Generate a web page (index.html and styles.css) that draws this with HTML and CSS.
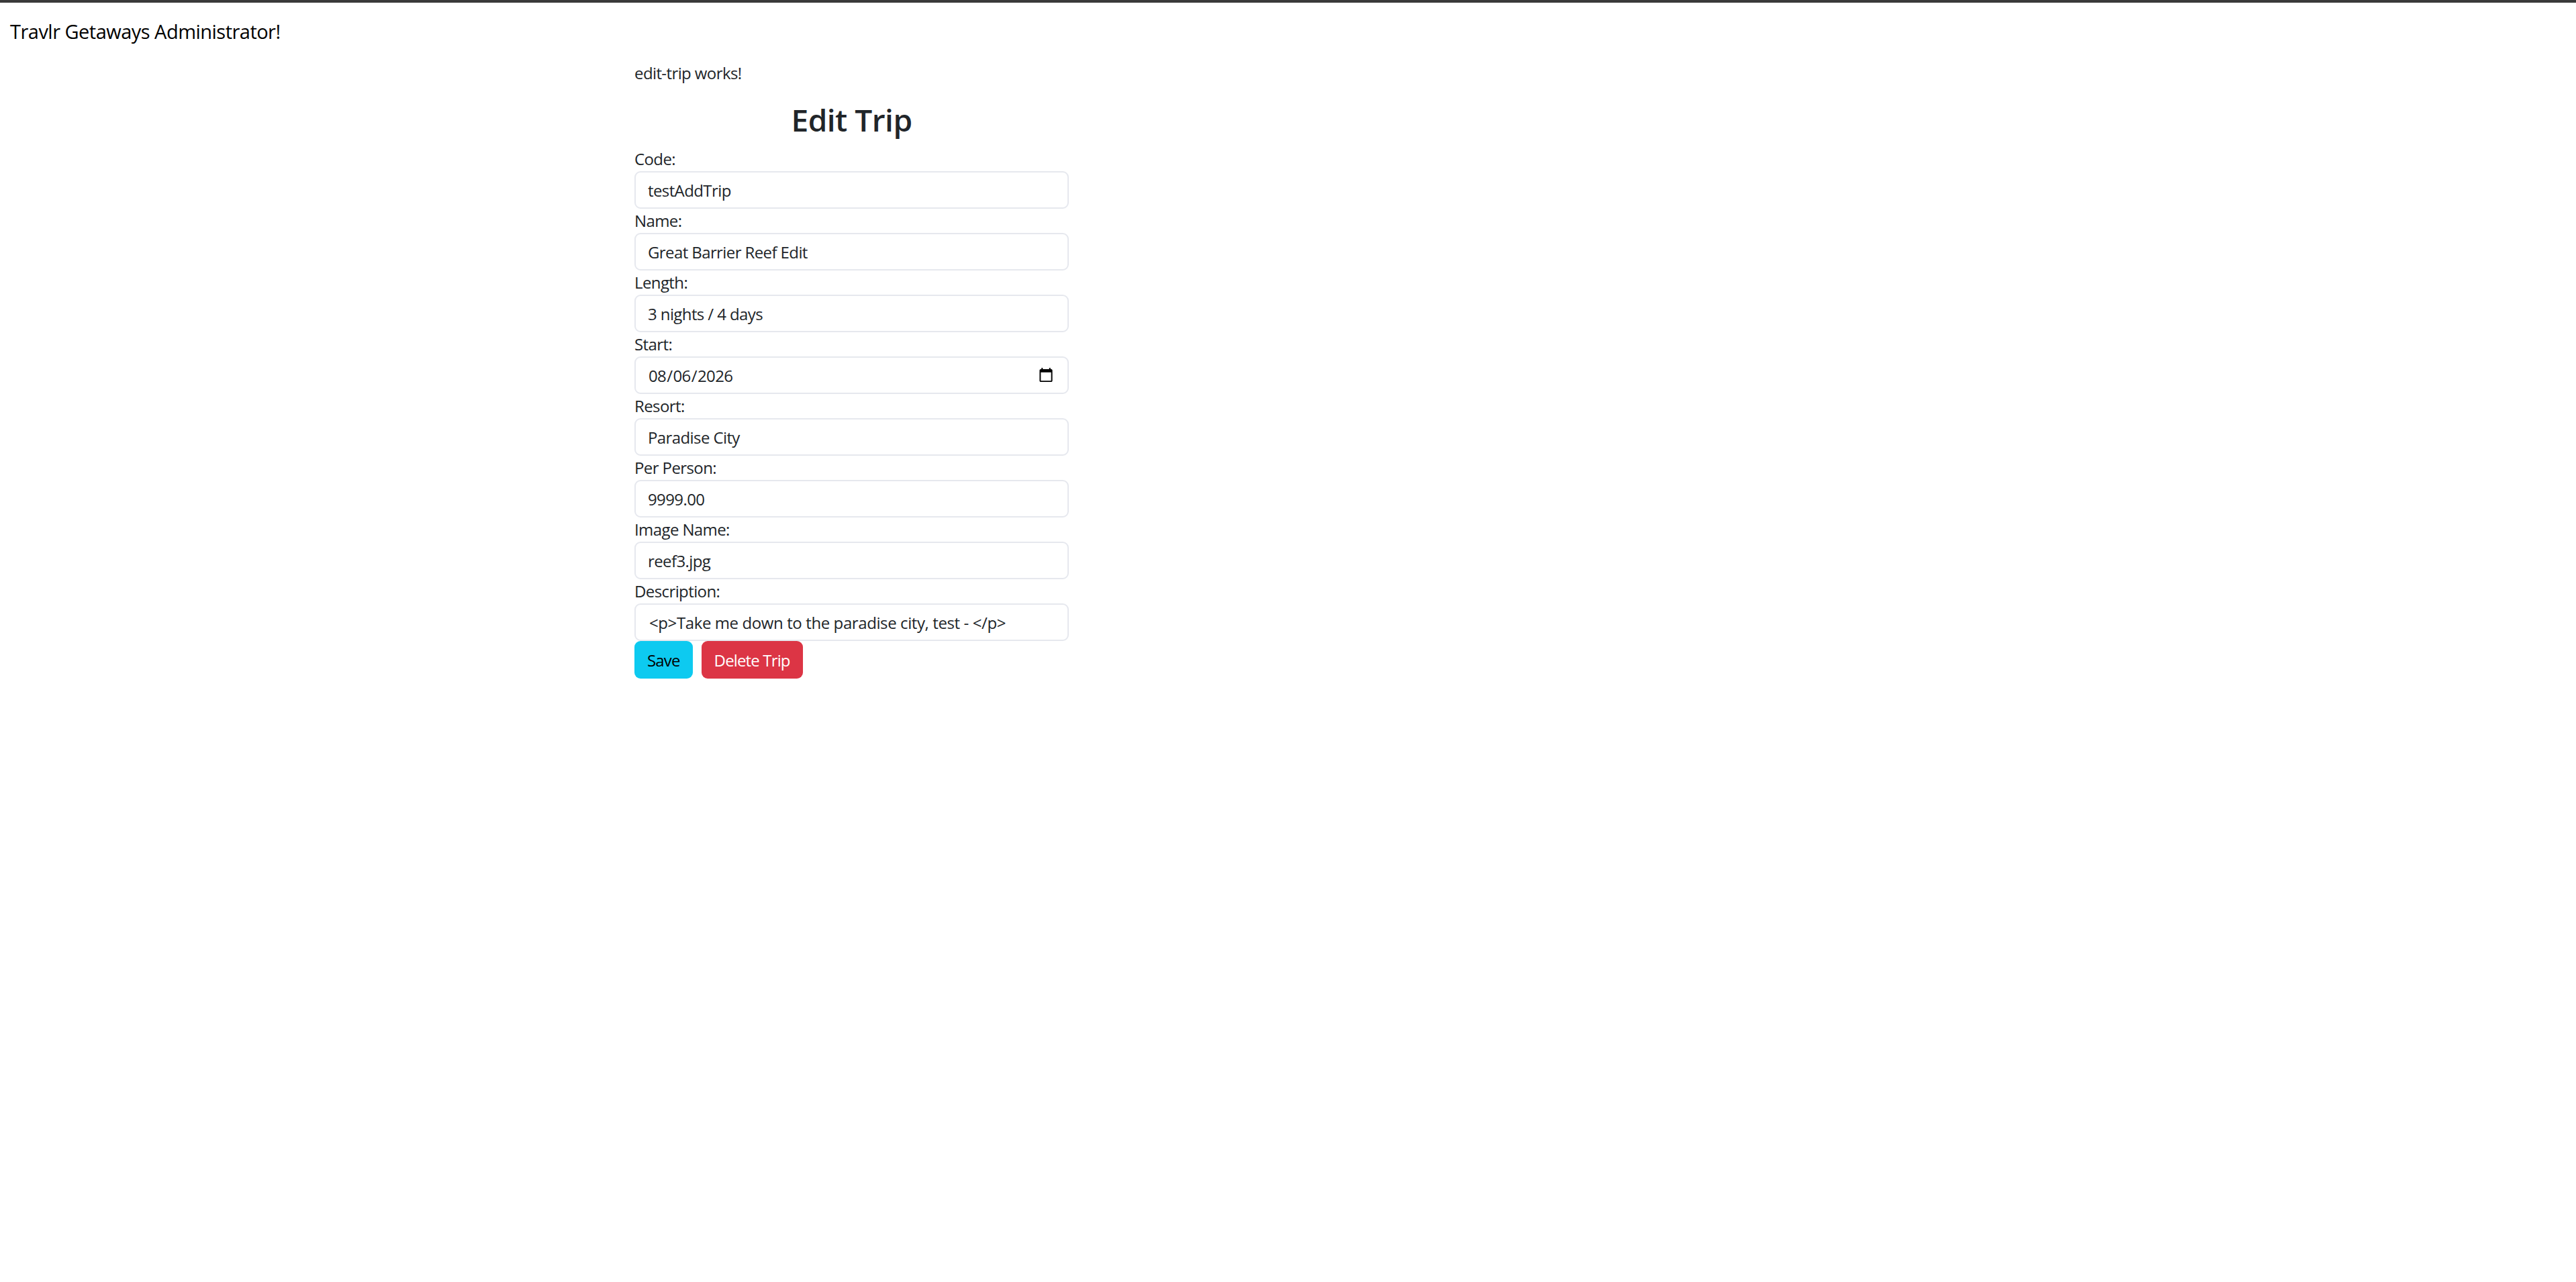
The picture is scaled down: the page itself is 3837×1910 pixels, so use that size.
FILE: index.html

```html
<!doctype html>
<html>
<head>
	<meta charset="utf-8">
	<title>Travlr Getaways Admin</title>
	<link rel="stylesheet" href="styles.css">
</head>
<body>
	<div class="brand">Travlr Getaways Administrator!</div>
	<div class="edit-wrap">
		<p class="works">edit-trip works!</p>
		<h2 class="edit-title">Edit Trip</h2>
		<form>
			<div class="form-group"><label>Code:</label><input class="form-control" type="text" value="testAddTrip"></div>
			<div class="form-group"><label>Name:</label><input class="form-control" type="text" value="Great Barrier Reef Edit"></div>
			<div class="form-group"><label>Length:</label><input class="form-control" type="text" value="3 nights / 4 days"></div>
			<div class="form-group"><label>Start:</label><input class="form-control" type="date" value="2026-08-06"></div>
			<div class="form-group"><label>Resort:</label><input class="form-control" type="text" value="Paradise City"></div>
			<div class="form-group"><label>Per Person:</label><input class="form-control" type="text" value="9999.00"></div>
			<div class="form-group"><label>Image Name:</label><input class="form-control" type="text" value="reef3.jpg"></div>
			<div class="form-group"><label>Description:</label><input class="form-control desc" type="text" value="<p>Take me down to the paradise city, test - </p>"></div>
			<div class="actions">
				<button class="btn btn-info" type="button">Save</button>
				<button class="btn btn-danger" type="button">Delete Trip</button>
			</div>
		</form>
	</div>
</body>
</html>
```

FILE: styles.css

```css
*{
	box-sizing:border-box;
}
body{
	margin:0;
	border-top:4px solid #3a3a3a;
	background:#fff;
	color:#212529;
	font-family:"Open Sans","Noto Sans",sans-serif;
	font-size:24px;
	letter-spacing:-0.6px;
}
.brand{
	padding:24px 0 0 15px;
	height:64px;
	color:#000;
	font-size:29px;
	letter-spacing:-0.52px;
	line-height:38px;
}
.edit-wrap{
	width:647px;
	margin-left:945px;
	padding-top:22px;
}
.works{
	margin:0;
	line-height:37px;
}
.edit-title{
	margin:22px 0 12px;
	text-align:center;
	font-size:46px;
	line-height:58px;
	font-weight:600;
	letter-spacing:-0.5px;
}
.form-group label{
	display:block;
	line-height:36px;
}
.form-control{
	display:block;
	width:100%;
	height:56px;
	padding:0 18px;
	border:2px solid #e6e8ee;
	border-radius:9px;
	background:#fff;
	color:#212529;
	font:inherit;
	letter-spacing:inherit;
	outline:none;
}
.desc{
	padding-left:20px;
	letter-spacing:-0.4px;
}
.actions{
	display:flex;
	gap:13px;
}
.btn{
	height:56px;
	padding:0 19px;
	border:0;
	border-radius:9px;
	font:inherit;
	letter-spacing:-0.85px;
}
.btn-info{
	background:#0dcaf0;
	color:#000;
}
.btn-danger{
	background:#dc3545;
	color:#fff;
}
```
